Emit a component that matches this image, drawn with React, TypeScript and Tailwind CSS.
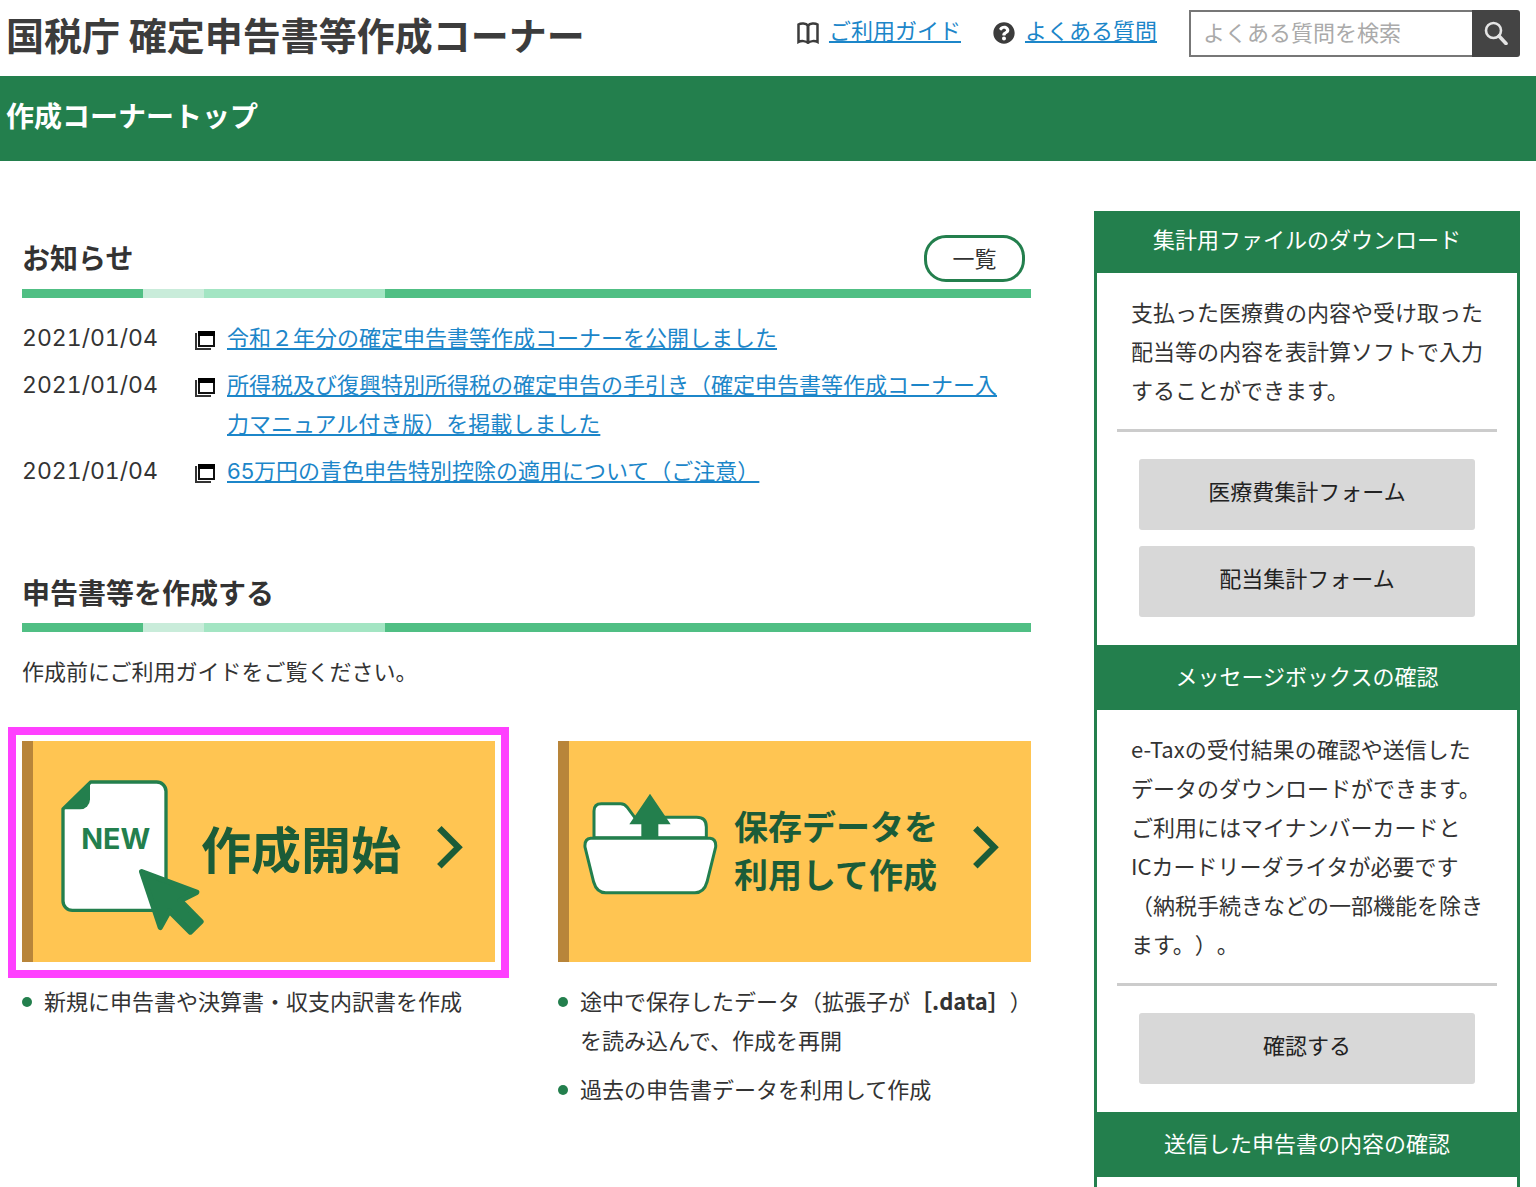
import type { ReactNode } from 'react';
import { FaQuestionCircle } from 'react-icons/fa';

const NEWS = [
  { date: '2021/01/04', title: '令和２年分の確定申告書等作成コーナーを公開しました' },
  {
    date: '2021/01/04',
    title: '所得税及び復興特別所得税の確定申告の手引き（確定申告書等作成コーナー入力マニュアル付き版）を掲載しました',
  },
  { date: '2021/01/04', title: '65万円の青色申告特別控除の適用について（ご注意）' },
];

function BookIcon() {
  return (
    <svg viewBox="0 0 22 22" className="h-[22px] w-[22px] shrink-0" aria-hidden="true">
      <path
        d="M11 3.500C9 1 4 .8 1.500 2.500V20c2.500-1.400 7.500-1.200 9.500 .8 2-2 7-2.200 9.500-.8V2.500C18 .8 13 1 11 3.500Z"
        fill="#fff"
        stroke="#3c3c3c"
        strokeWidth="2.500"
      />
      <path d="M11 3v18" stroke="#3c3c3c" strokeWidth="3" />
    </svg>
  );
}

function SearchIcon() {
  return (
    <svg viewBox="0 0 24 24" className="h-6 w-6" fill="none" stroke="#e4e4e4" aria-hidden="true">
      <circle cx="9.500" cy="9.500" r="7.500" strokeWidth="2.600" />
      <path d="M15 15l7 7.500" strokeWidth="3.600" strokeLinecap="round" />
    </svg>
  );
}

function WindowIcon() {
  return (
    <svg viewBox="0 0 20 20" className="h-5 w-5" aria-hidden="true">
      <path d="M1 3v16h15" fill="none" stroke="#333" strokeWidth="2" />
      <rect x="4" y="2" width="15" height="14" fill="#fff" stroke="#111" strokeWidth="2" />
      <path d="M3 1h17v5H3z" fill="#000" />
    </svg>
  );
}

function NewDocumentIcon() {
  return (
    <svg viewBox="180 138 435 513" className="h-[171px] w-[145px] shrink-0" aria-hidden="true">
      <path
        d="M272 186H470a28 28 0 0 1 28 28V543a28 28 0 0 1-28 28H217a28 28 0 0 1-28-28V267Z"
        fill="#fff"
        stroke="#237f4d"
        strokeWidth="10"
        strokeLinejoin="round"
      />
      <path d="M270 184V238a30 30 0 0 1-30 30H187Z" fill="#237f4d" />
      <text
        x="347"
        y="386"
        textAnchor="middle"
        className="fill-[#237f4d] font-[Inter] text-[86px] font-bold"
      >
        NEW
      </text>
      <path
        d="M425 455L590 517L541 542L603 605L571 636L508 573L481 622Z"
        fill="#237f4d"
        stroke="#237f4d"
        strokeWidth="16"
        strokeLinejoin="round"
      />
    </svg>
  );
}

function FolderIcon() {
  return (
    <svg viewBox="125 218 405 354" className="h-[118px] w-[135px] shrink-0" aria-hidden="true">
      <path
        d="M158 352V272q0-22 22-22H238q12 0 20 11L280 291H466q29 0 29 29V352Z"
        fill="#fff"
        stroke="#237f4d"
        strokeWidth="9"
      />
      <path
        d="M148 354H506q19 2 17 26L497 485q-9 32-36 32H193q-27 0-36-32L131 380q-2-24 17-26Z"
        fill="#fff"
        stroke="#237f4d"
        strokeWidth="9"
      />
      <path d="M326 220L388 312H351V354H300V312H264Z" fill="#237f4d" />
    </svg>
  );
}

function Chevron() {
  return (
    <svg viewBox="1313 318 78 153" className="mr-8 ml-auto h-[51px] w-[26px] shrink-0" aria-hidden="true">
      <path d="M1320 325L1377 382L1320 439" fill="none" stroke="#1b5c38" strokeWidth="19" />
    </svg>
  );
}

function SectionBar() {
  return (
    <div className="flex h-[9px] bg-[#50bf84]">
      <span className="w-[12%]" />
      <span className="w-[6%] bg-[#c9ecda]" />
      <span className="w-[18%] bg-[#a3e5c3]" />
    </div>
  );
}

function Bullet({ children }: { children: ReactNode }) {
  return (
    <li className="flex gap-3">
      <span className="mt-4 h-[10px] w-[10px] shrink-0 rounded-full bg-[#237f4d]" />
      <span className="whitespace-nowrap">{children}</span>
    </li>
  );
}

function SideButton({ children }: { children: ReactNode }) {
  return (
    <button type="button" className="h-[71px] rounded-[3px] bg-[#d8d8d8] pb-2 text-[#222]">
      {children}
    </button>
  );
}

function SideSection({ title, text, children }: { title: string; text?: ReactNode; children?: ReactNode }) {
  return (
    <section className="border-t-[3px] border-[#237f4d] first:border-t-0">
      <h2 className="bg-[#237f4d] pt-2 pb-[15px] text-center text-white">{title}</h2>
      <div className="px-5 pt-[19px] pb-7">
        <p className="px-[14px] pb-5 whitespace-nowrap">{text}</p>
        <hr className="border-t-[3px] border-[#ccc]" />
        <div className="mt-[27px] flex flex-col gap-4 px-[22px]">{children}</div>
      </div>
    </section>
  );
}

export default function App() {
  return (
    <div className="h-screen overflow-hidden bg-white font-['Noto_Sans_CJK_JP',sans-serif] text-[22px] leading-[39px] text-[#333] [text-spacing-trim:space-all]">
      <header className="flex h-[76px] items-center pr-4 pl-[6px]">
        <h1 className="pb-[10px] text-[38px] font-bold text-[#3c3c3c]">国税庁 確定申告書等作成コーナー</h1>
        <nav className="mr-8 ml-auto flex gap-8 pb-[10px]">
          <a href="#guide" className="flex items-center gap-[10px] text-[#1c86c9]">
            <BookIcon />
            <span className="pb-2 underline underline-offset-2">ご利用ガイド</span>
          </a>
          <a href="#faq" className="flex items-center gap-[10px] text-[#1c86c9]">
            <FaQuestionCircle className="text-[#3c3c3c]" />
            <span className="pb-2 underline underline-offset-2">よくある質問</span>
          </a>
        </nav>
        <form className="mb-[10px] flex h-[47px]" onSubmit={(e) => e.preventDefault()}>
          <input
            type="search"
            aria-label="よくある質問を検索"
            placeholder="よくある質問を検索"
            className="w-[283px] border-2 border-r-0 border-[#777] px-3 pb-1 placeholder:text-[#aaa]"
          />
          <button
            type="submit"
            aria-label="検索"
            className="flex w-12 items-center justify-center rounded-r-[3px] bg-[#444]"
          >
            <SearchIcon />
          </button>
        </form>
      </header>

      <div className="h-[85px] bg-[#237f4d] px-[6px] pt-5 text-[28px] font-bold text-white">作成コーナートップ</div>

      <div className="flex items-start gap-[63px] pt-[50px] pr-4 pl-[22px]">
        <main className="min-w-0 flex-1">
          <section className="pt-6">
            <div className="flex h-[54px] items-start justify-between pr-[6px]">
              <h2 className="pt-[3px] text-[28px] font-bold">お知らせ</h2>
              <button type="button" className="h-[47px] w-[101px] rounded-[22px] border-[3px] border-[#237f4d] pb-2">
                一覧
              </button>
            </div>
            <SectionBar />
            <ul className="mt-[21px] flex flex-col gap-2">
              {NEWS.map((item) => (
                <li key={item.title} className="flex">
                  <time className="w-[173px] shrink-0 font-[Inter] text-[23px] tabular-nums">{item.date}</time>
                  <span className="w-8 shrink-0 pt-[11px]">
                    <WindowIcon />
                  </span>
                  <a
                    href="#news"
                    className="mr-7 font-[Inter,'Noto_Sans_CJK_JP',sans-serif] text-[#1c86c9] underline underline-offset-2"
                  >
                    {item.title}
                  </a>
                </li>
              ))}
            </ul>
          </section>

          <section className="pt-[82px]">
            <h2 className="h-[50px] text-[28px] font-bold">申告書等を作成する</h2>
            <SectionBar />
            <p className="mt-[19px]">作成前にご利用ガイドをご覧ください。</p>

            <div className="mt-[51px] grid grid-cols-2 gap-[63px]">
              <div>
                <div className="relative">
                  <a
                    href="#new"
                    className="flex h-[221px] items-center border-l-[11px] border-[#b8853a] bg-[#ffc552] pl-[27px] text-[#1b5c38]"
                  >
                    <NewDocumentIcon />
                    <span className="-ml-1 pb-2 text-[50px] font-bold whitespace-nowrap">作成開始</span>
                    <Chevron />
                  </a>
                  <div className="pointer-events-none absolute -inset-x-[14px] -top-[14px] -bottom-4 border-8 border-[#ff40ff]" />
                </div>
                <ul className="mt-[19px]">
                  <Bullet>新規に申告書や決算書・収支内訳書を作成</Bullet>
                </ul>
              </div>
              <div>
                <a
                  href="#resume"
                  className="flex h-[221px] items-center border-l-[11px] border-[#b8853a] bg-[#ffc552] pl-[14px] text-[#1b5c38]"
                >
                  <FolderIcon />
                  <span className="ml-4 pb-1 text-[34px] leading-[48px] font-bold whitespace-nowrap">
                    保存データを
                    <br />
                    利用して作成
                  </span>
                  <Chevron />
                </a>
                <ul className="mt-[19px] flex flex-col gap-[10px]">
                  <Bullet>
                    途中で保存したデータ（拡張子が<b>［.data］</b>）
                    <br />
                    を読み込んで、作成を再開
                  </Bullet>
                  <Bullet>過去の申告書データを利用して作成</Bullet>
                </ul>
              </div>
            </div>
          </section>
        </main>

        <aside className="w-[426px] shrink-0 border-x-[3px] border-[#237f4d]">
          <SideSection
            title="集計用ファイルのダウンロード"
            text={
              <>
                支払った医療費の内容や受け取った
                <br />
                配当等の内容を表計算ソフトで入力
                <br />
                することができます。
              </>
            }
          >
            <SideButton>医療費集計フォーム</SideButton>
            <SideButton>配当集計フォーム</SideButton>
          </SideSection>
          <SideSection
            title="メッセージボックスの確認"
            text={
              <>
                e-Taxの受付結果の確認や送信した
                <br />
                データのダウンロードができます。
                <br />
                ご利用にはマイナンバーカードと
                <br />
                ICカードリーダライタが必要です
                <br />
                （納税手続きなどの一部機能を除き
                <br />
                ます。）。
              </>
            }
          >
            <SideButton>確認する</SideButton>
          </SideSection>
          <SideSection title="送信した申告書の内容の確認" />
        </aside>
      </div>
    </div>
  );
}
